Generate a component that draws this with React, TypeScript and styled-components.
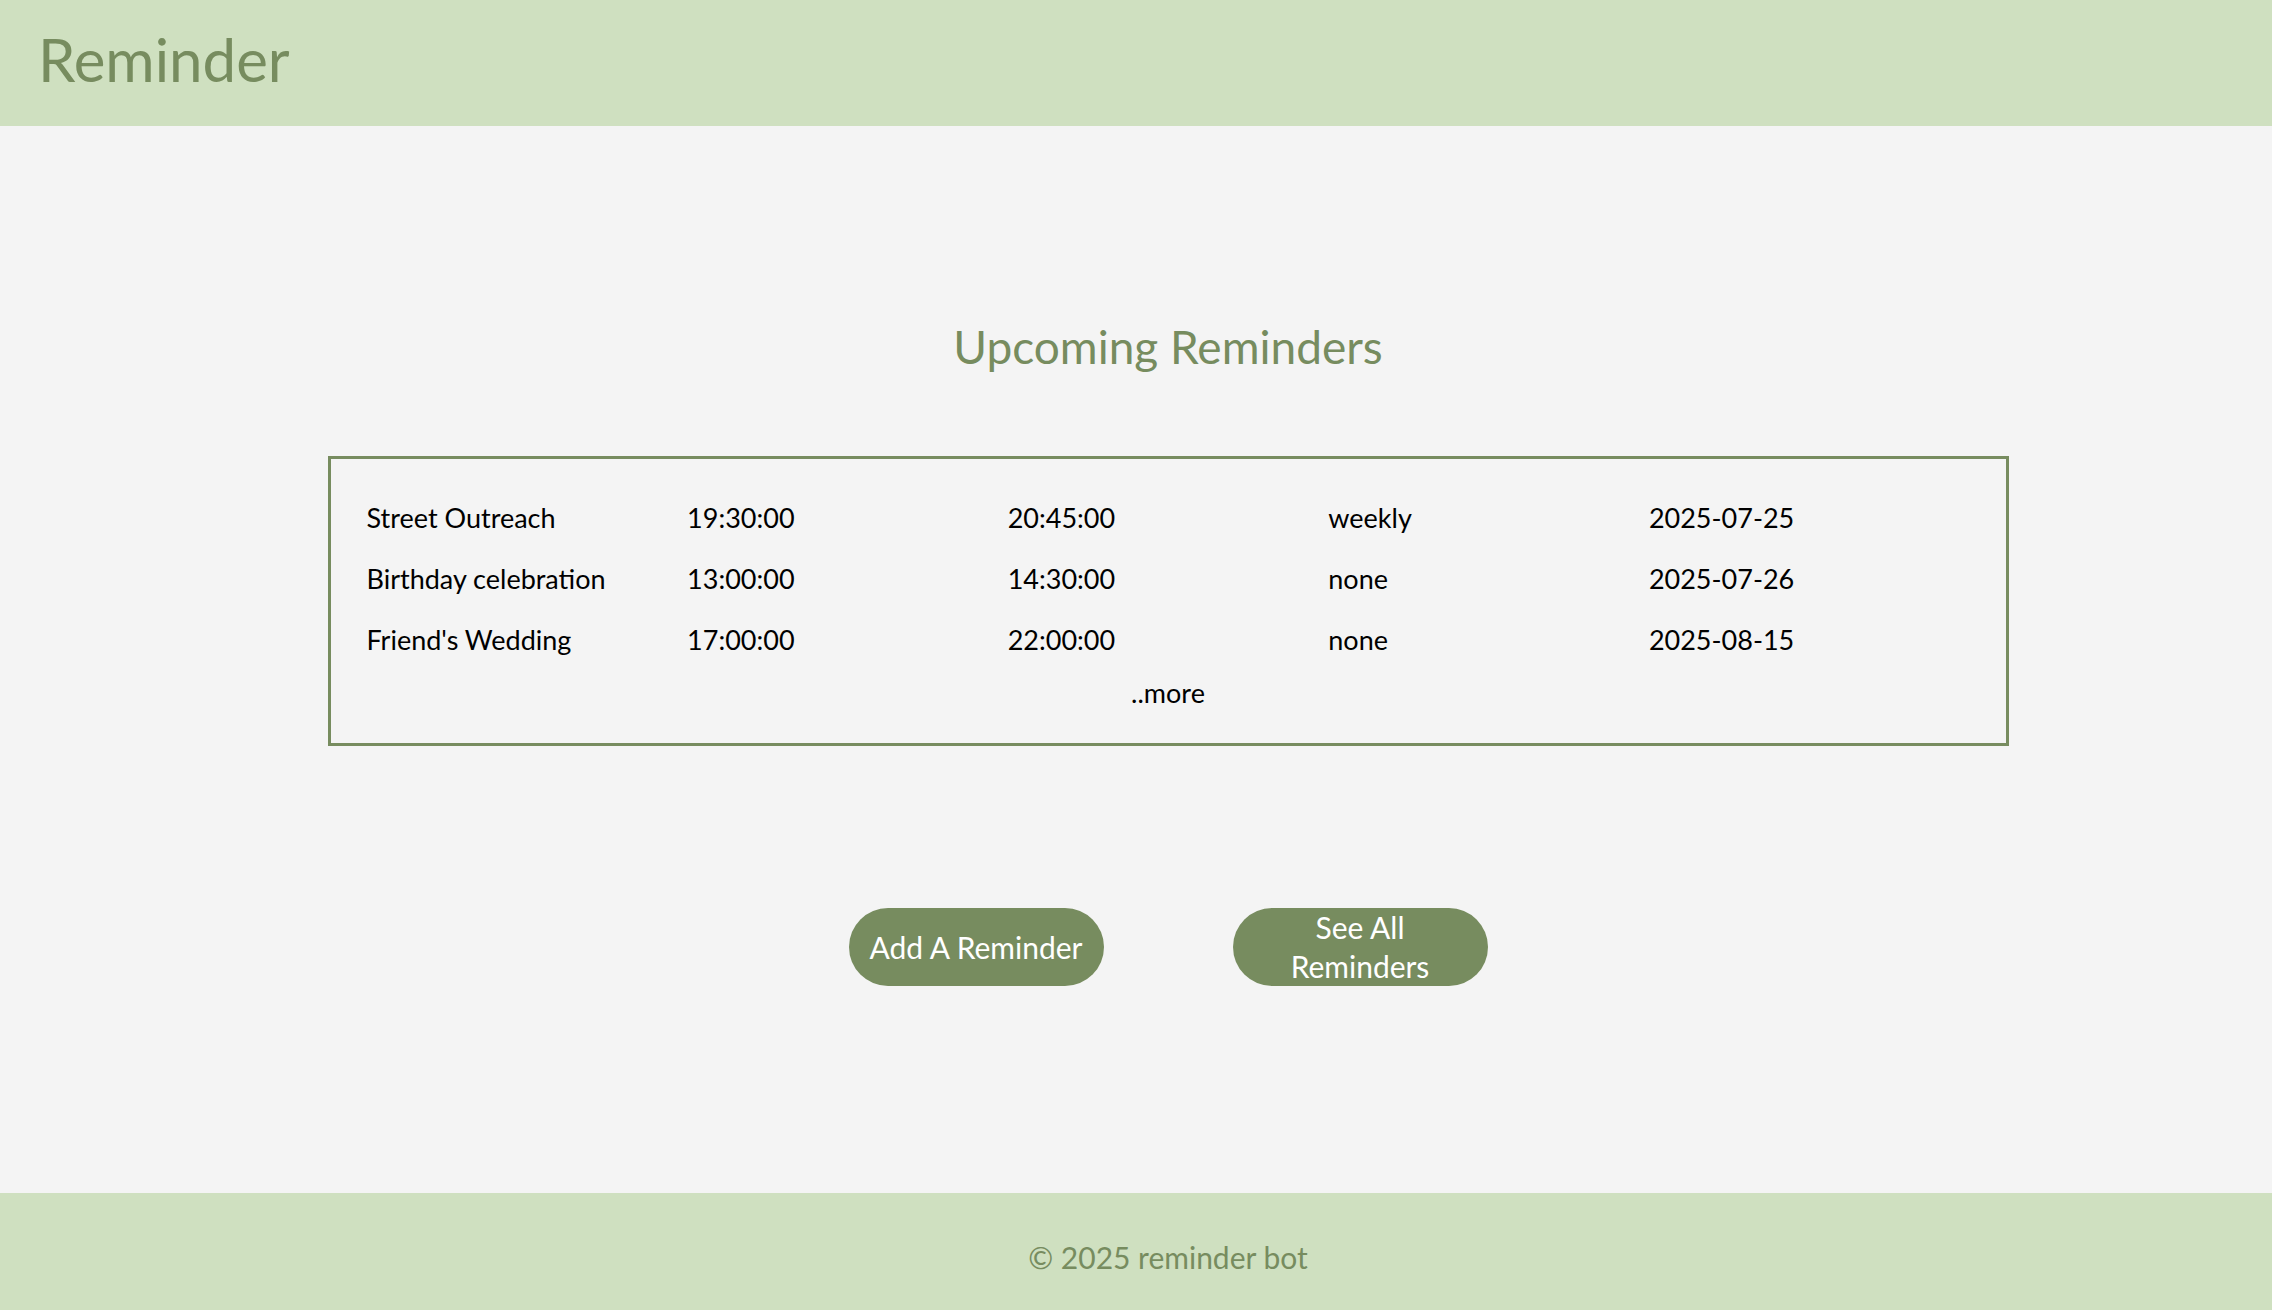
import styled, { createGlobalStyle } from 'styled-components'

const green = '#778c5f'

const GlobalStyle = createGlobalStyle`
  html, body {
    margin: 0;
    padding: 0;
    background: #f4f4f4;
  }
  body {
    font-family: Lato, 'Open Sans', sans-serif;
  }
  * {
    box-sizing: border-box;
  }
`

const Page = styled.div({
  height: '100vh',
  display: 'flex',
  flexDirection: 'column',
  overflow: 'hidden',
})

const Header = styled.header({
  background: '#cfe0c0',
  height: '126px',
  flexShrink: 0,
  padding: '23px 38px 0',
})

const Brand = styled.h1({
  margin: 0,
  fontSize: '60px',
  fontWeight: 400,
  lineHeight: 'normal',
  color: green,
})

const Main = styled.main({
  flex: 1,
  display: 'flex',
  flexDirection: 'column',
  alignItems: 'center',
  padding: '193px 0 0 64px',
})

const SectionTitle = styled.h2({
  margin: 0,
  fontSize: '46px',
  fontWeight: 400,
  lineHeight: 'normal',
  color: green,
})

const Board = styled.section({
  width: '1681px',
  marginTop: '82px',
  border: `3px solid ${green}`,
  padding: '28px 36px 27px',
})

const Row = styled.div({
  display: 'grid',
  gridTemplateColumns: 'repeat(5, 1fr)',
  height: '61px',
  lineHeight: '61px',
  fontSize: '27px',
  color: '#000',
})

const Cell = styled.span({
  whiteSpace: 'nowrap',
})

const More = styled.div({
  textAlign: 'center',
  fontSize: '27px',
  lineHeight: '46px',
  color: '#000',
})

const Actions = styled.div({
  display: 'flex',
  justifyContent: 'center',
  gap: '129px',
  marginTop: '162px',
})

const PillButton = styled.button({
  width: '255px',
  height: '78px',
  padding: '0 16px',
  border: 'none',
  borderRadius: '39px',
  background: green,
  color: '#fff',
  fontFamily: 'inherit',
  fontSize: '30px',
  lineHeight: '39px',
  cursor: 'pointer',
})

const Footer = styled.footer({
  background: '#cfe0c0',
  height: '117px',
  flexShrink: 0,
  padding: '46px 0 0 64px',
  textAlign: 'center',
  fontSize: '30px',
  lineHeight: '36px',
  color: green,
})

const reminders = [
  ['Street Outreach', '19:30:00', '20:45:00', 'weekly', '2025-07-25'],
  ['Birthday celebration', '13:00:00', '14:30:00', 'none', '2025-07-26'],
  ["Friend's Wedding", '17:00:00', '22:00:00', 'none', '2025-08-15'],
]

export default function App() {
  return (
    <Page>
      <GlobalStyle />
      <Header>
        <Brand>Reminder</Brand>
      </Header>
      <Main>
        <SectionTitle>Upcoming Reminders</SectionTitle>
        <Board>
          {reminders.map((r) => (
            <Row key={r[0]}>
              {r.map((v, i) => (
                <Cell key={i}>{v}</Cell>
              ))}
            </Row>
          ))}
          <More>..more</More>
        </Board>
        <Actions>
          <PillButton>Add A Reminder</PillButton>
          <PillButton>See All Reminders</PillButton>
        </Actions>
      </Main>
      <Footer>© 2025 reminder bot</Footer>
    </Page>
  )
}
